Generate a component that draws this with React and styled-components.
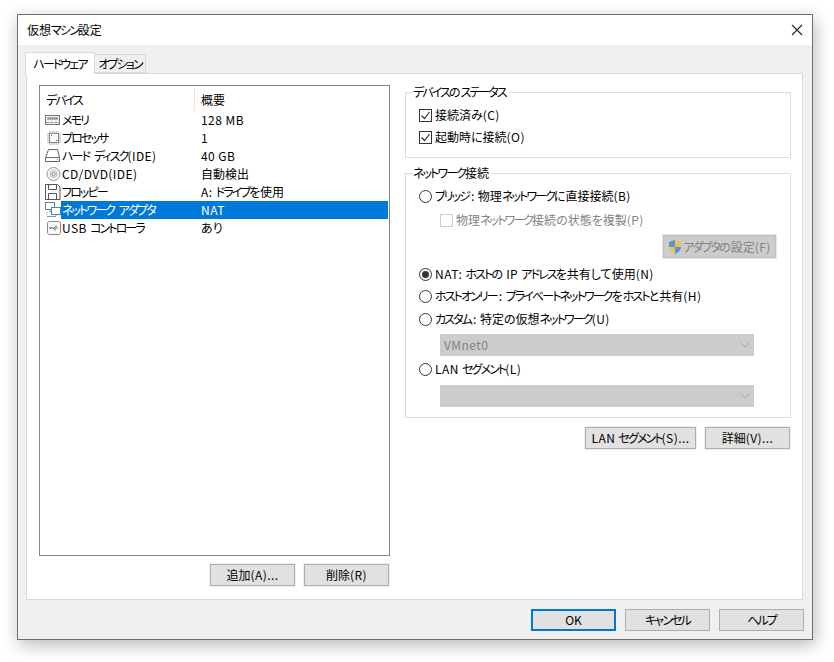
import React from "react";
import styled, { createGlobalStyle } from "styled-components";

const Global = createGlobalStyle`
  html, body { margin: 0; padding: 0; background: #fff; }
  body { font-family: "Noto Sans CJK JP", "Noto Sans", sans-serif; font-size: 12px; color: #000; }
  * { box-sizing: border-box; }
`;
const Page = styled.div`
  width: 834px; height: 662px; padding: 14px 0 0 17px; overflow: hidden;
  font-feature-settings: "palt" 1;
`;
const Win = styled.div`
  width: 796px; height: 626px; border: 1px solid #6e6e6e; background: #f0f0f0;
  display: flex; flex-direction: column;
  box-shadow: 2px 5px 16px rgba(0,0,0,.28);
`;
const TitleBar = styled.div`
  height: 30px; background: #fff; display: flex; align-items: center; justify-content: space-between;
  padding: 0 9px 0 9px; font-size: 12px; line-height: 16px;
`;
const Body = styled.div`
  flex: 1; display: flex; flex-direction: column; padding: 7px 9px 0 8px;
`;
const TabStrip = styled.div`
  display: flex; align-items: flex-end; height: 22px; margin-bottom: -1px; position: relative; z-index: 1; margin-left: -1px;
`;
const Tab = styled.div`
  display: flex; align-items: center; justify-content: center; white-space: nowrap;
  border: 1px solid #d9d9d9; line-height: 16px;
  background: ${p => (p.$active ? "#fff" : "#f0f0f0")};
  width: ${p => p.$w}px;
  height: ${p => (p.$active ? 22 : 19)}px;
  border-bottom: ${p => (p.$active ? "none" : "1px solid #d9d9d9")};
  ${p => (p.$active ? "" : "margin-left: -1px; margin-bottom: 1px;")}
`;
const Panel = styled.div`
  width: 777px; height: 527px; background: #fff; border: 1px solid #d9d9d9;
  display: grid; grid-template-columns: 351px 386px; column-gap: 15px; padding: 11px 0 0 12px;
`;
const Left = styled.div`display: flex; flex-direction: column;`;
const List = styled.div`
  width: 351px; height: 471px; border: 1px solid #828790; background: #fff; padding: 1px 1px 0 0;
`;
const HeaderRow = styled.div`
  display: grid; grid-template-columns: 155px 1fr; height: 24px;
`;
const HeaderCell = styled.div`
  padding-left: ${p => p.$pl}px; height: 23px; line-height: 24px; margin-top: 1px;
  ${p => (p.$sep ? "border-right: 1px solid #e5e5e5;" : "")}
`;
const Row = styled.div`
  display: grid; grid-template-columns: 16px 133px 1fr; height: 18px; align-items: center; line-height: 18px;
  padding-left: 5px;
`;
const IconCell = styled.div`width: 16px; height: 16px; display: flex;`;
const Name = styled.div`
  height: 18px; padding-left: 1px; white-space: nowrap;
  background: ${p => (p.$sel ? "#0078d7" : "transparent")}; color: ${p => (p.$sel ? "#fff" : "#000")};
`;
const Val = styled.div`
  height: 18px; padding-left: 7px; white-space: nowrap;
  background: ${p => (p.$sel ? "#0078d7" : "transparent")}; color: ${p => (p.$sel ? "#fff" : "#000")};
`;
const BtnRow = styled.div`
  display: flex; justify-content: flex-end; gap: 9px; margin-top: ${p => p.$mt || 0}px; padding-right: ${p => p.$pr || 0}px;
`;
const Btn = styled.div`
  width: ${p => p.$w || 85}px; height: 22px; background: #e1e1e1; border: ${p => (p.$def ? "2px solid #0078d7" : "1px solid #adadad")};
  display: flex; align-items: center; justify-content: center; line-height: 16px; white-space: nowrap;
  box-shadow: 0 0 0 1px #f0f0f0;
`;
const DisabledBtn = styled(Btn)`
  background: #cccccc; border-color: #bfbfbf; color: #838383; gap: 1px; height: 23px; box-shadow: 0 0 0 1px #e8e8e8;
`;
const Right = styled.div`display: flex; flex-direction: column; padding-top: 0;`;
const Group = styled.fieldset`
  margin: ${p => p.$mt || 0}px 0 0 0; padding: 0 0 0 13px; border: 1px solid #dcdcdc; width: 386px; height: ${p => p.$h}px;
  min-width: 0; display: block;
`;
const Legend = styled.legend`
  margin-left: -6px; padding: 0 3px 0 0; line-height: 14px; height: 14px; font-size: 12px;
`;
const Opt = styled.div`
  display: flex; align-items: center; gap: 3px; height: 18px; line-height: 18px; white-space: nowrap;
  margin-top: ${p => p.$mt || 0}px; margin-left: ${p => p.$ml || 0}px; color: ${p => (p.$dis ? "#838383" : "#000")};
`;
const Check = styled.span`
  width: 13px; height: 13px; border: 1px solid ${p => (p.$dis ? "#cccccc" : "#333")}; background: #fff; display: flex; flex: none;
`;
const Radio = styled.span`
  width: 13px; height: 13px; border: 1px solid #333; border-radius: 50%; background: #fff; flex: none;
  display: flex; align-items: center; justify-content: center;
`;
const Dot = styled.span`width: 7px; height: 7px; border-radius: 50%; background: #333;`;
const Select = styled.div`
  width: 314px; height: 22px; background: #cccccc; color: #838383; display: flex; align-items: center;
  justify-content: space-between; padding: 0 4px 0 4px; margin: ${p => p.$mt}px 0 0 21px; line-height: 16px;
`;
const AdapterWrap = styled.div`display: flex; justify-content: flex-end; margin: 6px 0 0 0; padding-right: 14px;`;
const Footer = styled.div`
  display: flex; justify-content: flex-end; gap: 9px; margin-top: 9px; padding-right: 0; margin-right: -1px;
`;
const Kana = styled.span`letter-spacing: -1.9px;`;
const Latin = styled.span`letter-spacing: .45px; margin-left: ${p => p.$ml || 0}px; word-spacing: ${p => p.$ws || 0}px;`;

const T = ({ children }) => (
  <span>
    {children.split(/([\u30A0-\u30FF]+|[\x20-\x7E]+)/).filter(Boolean).map((s, i) =>
      /^[\u30A0-\u30FF]/.test(s) ? <Kana key={i}>{s}</Kana>
      : /^[\x20-\x7E]/.test(s) ? <Latin key={i} $ml={s[0] === ":" ? 2 : 0} $ws={s === " " ? 1.5 : 0}>{s}</Latin>
      : <React.Fragment key={i}>{s}</React.Fragment>
    )}
  </span>
);

const CloseIcon = () => (
  <svg width="12" height="12" viewBox="0 0 12 12"><path d="M1 1l10 10M11 1L1 11" stroke="#222" strokeWidth="1.1" fill="none" /></svg>
);
const Mem = () => (
  <svg width="16" height="16" viewBox="0 0 16 16" fill="none">
    <rect x=".5" y="3.500" width="14" height="9" fill="#f0f0f0" stroke="#777" />
    <rect x="2" y="5" width="11" height="3" fill="#b5b5b5" />
    <path d="M3 6.500h9" stroke="#777" strokeDasharray="1 1" />
    <path d="M1 10.500h13" stroke="#999" strokeDasharray="3 1" />
  </svg>
);
const Cpu = () => (
  <svg width="16" height="16" viewBox="0 0 16 16" fill="none">
    <path d="M5 1v14M7 1v14M9 1v14M11 1v14M13 1v14M2 4h14M2 6h14M2 8h14M2 10h14M2 12h14" stroke="#b5b5b5" />
    <rect x="4.500" y="3.500" width="9" height="9" fill="#f6f6f6" stroke="#888" />
    <rect x="6" y="5" width="1" height="1" fill="#555" />
    <rect x="11" y="10" width="1" height="1" fill="#555" />
  </svg>
);
const Hdd = () => (
  <svg width="16" height="16" viewBox="0 0 16 16" fill="none">
    <path d="M3.500 1.500h9l2 8v4h-14v-4z" fill="#fff" stroke="#666" />
    <path d="M1 9.500h13" stroke="#666" />
    <path d="M12 11.500h1" stroke="#888" />
  </svg>
);
const Cd = () => (
  <svg width="16" height="16" viewBox="0 0 16 16" fill="none">
    <circle cx="8.500" cy="8" r="6.500" fill="#f5f5f5" stroke="#999" />
    <circle cx="8.500" cy="8" r="3.500" fill="#e4e4e4" stroke="#bbb" />
    <circle cx="8.500" cy="8" r="1.500" fill="#fff" stroke="#888" />
  </svg>
);
const Floppy = () => (
  <svg width="16" height="16" viewBox="0 0 16 16" fill="none">
    <path d="M.5.500h12l2.500 2.500v12.500H.5z" fill="#fff" stroke="#555" />
    <path d="M3.500.5v5h8v-5M3.500 15.500v-6h8v6" stroke="#555" />
  </svg>
);
const Net = () => (
  <svg width="16" height="16" viewBox="0 0 16 16" fill="none">
    <rect x=".5" y=".5" width="9" height="7" fill="#fff" stroke="#4b87b5" />
    <rect x="6.500" y="5.500" width="9" height="7" fill="#fff" stroke="#4b87b5" />
    <path d="M5 8v3M2 14.500h9M11 13v1" stroke="#6d9cbf" />
    <path d="M2 10v3" stroke="#6d9cbf" strokeDasharray="1 1" />
  </svg>
);
const Usb = () => (
  <svg width="16" height="16" viewBox="0 0 16 16" fill="none">
    <rect x="2.500" y="1.500" width="13" height="13" rx="2" fill="#fafafa" stroke="#888" />
    <path d="M5 8h8M9 8l2-2h1M8 8l2 2h1" stroke="#777" />
    <circle cx="5.500" cy="8" r="1" fill="#777" />
  </svg>
);
const Tick = () => (
  <svg width="11" height="11" viewBox="0 0 11 11"><path d="M1.500 5.500l3 3 5-6.500" stroke="#333" strokeWidth="1.2" fill="none" /></svg>
);
const Shield = () => (
  <svg width="14" height="16" viewBox="0 0 14 16">
    <path d="M7 1L1 3v5h6z" fill="#5a93cf" />
    <path d="M7 1l6 2v5H7z" fill="#e8c45a" />
    <path d="M7 8v7c3-1.500 6-3.500 6-7z" fill="#5a93cf" />
    <path d="M1 8h6v7C4 13.500 1 11.500 1 8z" fill="#e8c45a" />
  </svg>
);
const Chevron = () => (
  <svg width="10" height="6" viewBox="0 0 10 6"><path d="M.5.500L5 5 9.500.5" stroke="#a3a3a3" fill="none" /></svg>
);

const rows = [
  [Mem, "メモリ", "128 MB"],
  [Cpu, "プロセッサ", "1"],
  [Hdd, "ハード ディスク(IDE)", "40 GB"],
  [Cd, "CD/DVD(IDE)", "自動検出"],
  [Floppy, "フロッピー", "A: ドライブを使用"],
  [Net, "ネットワーク アダプタ", "NAT", true],
  [Usb, "USB コントローラ", "あり"],
];

export default function App() {
  return (
    <Page>
      <Global />
      <Win>
        <TitleBar><T>仮想マシン設定</T><CloseIcon /></TitleBar>
        <Body>
          <TabStrip>
            <Tab $active $w={70}><T>ハードウェア</T></Tab>
            <Tab $w={52}><T>オプション</T></Tab>
          </TabStrip>
          <Panel>
            <Left>
              <List>
                <HeaderRow>
                  <HeaderCell $pl={6} $sep><T>デバイス</T></HeaderCell>
                  <HeaderCell $pl={6}>概要</HeaderCell>
                </HeaderRow>
                {rows.map(([I, n, v, sel]) => (
                  <Row key={n}>
                    <IconCell><I /></IconCell>
                    <Name $sel={sel}><T>{n}</T></Name>
                    <Val $sel={sel}><T>{v}</T></Val>
                  </Row>
                ))}
              </List>
              <BtnRow $mt={8} $pr={1}>
                <Btn><T>追加(A)...</T></Btn>
                <Btn><T>削除(R)</T></Btn>
              </BtnRow>
            </Left>
            <Right>
              <Group $h={73}>
                <Legend><T>デバイスのステータス</T></Legend>
                <Opt $mt={7}><Check><Tick /></Check><T>接続済み(C)</T></Opt>
                <Opt $mt={4}><Check><Tick /></Check><T>起動時に接続(O)</T></Opt>
              </Group>
              <Group $h={252} $mt={8}>
                <Legend><T>ネットワーク接続</T></Legend>
                <Opt $mt={7}><Radio /><T>ブリッジ: 物理ネットワークに直接接続(B)</T></Opt>
                <Opt $mt={6} $ml={21} $dis><Check $dis /><T>物理ネットワーク接続の状態を複製(P)</T></Opt>
                <AdapterWrap>
                  <DisabledBtn $w={113}><Shield /><T>アダプタの設定(F)</T></DisabledBtn>
                </AdapterWrap>
                <Opt $mt={7}><Radio><Dot /></Radio><T>NAT: ホストの IP アドレスを共有して使用(N)</T></Opt>
                <Opt $mt={4}><Radio /><T>ホストオンリー: プライベートネットワークをホストと共有(H)</T></Opt>
                <Opt $mt={5}><Radio /><T>カスタム: 特定の仮想ネットワーク(U)</T></Opt>
                <Select $mt={6}><T>VMnet0</T><Chevron /></Select>
                <Opt $mt={4}><Radio /><T>LAN セグメント(L)</T></Opt>
                <Select $mt={7}><span /><Chevron /></Select>
              </Group>
              <BtnRow $mt={9} $pr={1}>
                <Btn $w={111}><T>LAN セグメント(S)...</T></Btn>
                <Btn><T>詳細(V)...</T></Btn>
              </BtnRow>
            </Right>
          </Panel>
          <Footer>
            <Btn $def>OK</Btn>
            <Btn><T>キャンセル</T></Btn>
            <Btn><T>ヘルプ</T></Btn>
          </Footer>
        </Body>
      </Win>
    </Page>
  );
}
